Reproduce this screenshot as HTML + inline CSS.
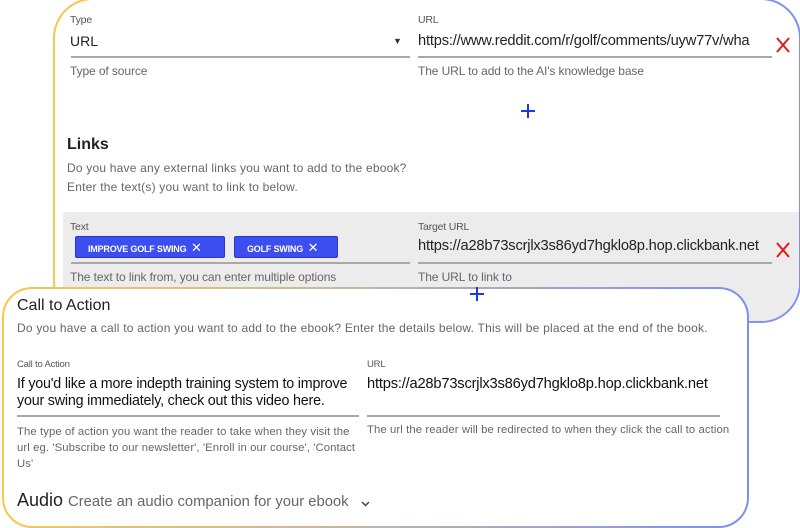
<!DOCTYPE html>
<html><head><style>
*{margin:0;padding:0;box-sizing:border-box}
body{width:800px;height:528px;background:#fff;position:relative;overflow:hidden;font-family:"Liberation Sans",sans-serif;color:#222}
.card{position:absolute;border:2px solid transparent;background:linear-gradient(#fff,#fff) padding-box,linear-gradient(90deg,#f6c94c 0%,#c8b7a0 45%,#7d8ff2 100%) border-box;overflow:hidden}
.a{position:absolute;white-space:nowrap}
.lbl{font-size:10.5px;color:#555;letter-spacing:-0.2px}
.hlp{font-size:12px;color:#666;letter-spacing:-0.1px}
.ul{position:absolute;height:2px;background:#a8a8a8}
.x{position:absolute;width:14px;height:16px}
.plus{position:absolute;width:14px;height:14px}
.chip{position:absolute;background:#3d4ef0;border:1px solid #2a37c8;color:#fff;font-size:9px;font-weight:bold;height:22px;line-height:21px;padding-left:12px;border-radius:2px;letter-spacing:-0.2px}
</style></head><body>
<div class="card" style="left:53px;top:-2px;width:748px;height:325px;border-radius:40px">
  <div style="position:absolute;left:8px;top:212px;width:740px;height:120px;background:#ececec"></div>
</div>
<div class="a lbl" style="left:70px;top:14px">Type</div>
<div class="a" style="left:70px;top:33px;font-size:14px">URL</div>
<div class="a" style="left:393px;top:36px;font-size:9px;color:#333">▼</div>
<div class="ul" style="left:71px;top:56px;width:339px"></div>
<div class="a hlp" style="left:70px;top:64px">Type of source</div>
<div class="a lbl" style="left:418px;top:14px">URL</div>
<div class="a" style="left:418px;top:33px;font-size:14.7px;letter-spacing:-0.2px">https://www.reddit.com/r/golf/comments/uyw77v/wha</div>
<div class="ul" style="left:418px;top:56px;width:354px"></div>
<div class="a hlp" style="left:418px;top:64px">The URL to add to the AI's knowledge base</div>
<svg class="x" style="left:776px;top:37px" viewBox="0 0 14 16"><path d="M1 1L13 15M13 1L1 15" stroke="#e31b1b" stroke-width="2"/></svg>
<svg class="plus" style="left:521px;top:104px" viewBox="0 0 14 14"><path d="M7 0V14M0 7H14" stroke="#2336e6" stroke-width="2"/></svg>
<div class="a" style="left:67px;top:136px;font-size:16px;font-weight:bold;color:#222">Links</div>
<div class="a hlp" style="left:67px;top:161px;font-size:12px;letter-spacing:0.2px">Do you have any external links you want to add to the ebook?</div>
<div class="a hlp" style="left:67px;top:180px;font-size:12px;letter-spacing:0.2px">Enter the text(s) you want to link to below.</div>
<div class="a lbl" style="left:70px;top:221px">Text</div>
<div class="chip" style="left:75px;top:236px;width:150px">IMPROVE GOLF SWING &nbsp;<span style="font-size:13px;font-weight:normal">✕</span></div>
<div class="chip" style="left:234px;top:236px;width:104px">GOLF SWING &nbsp;<span style="font-size:13px;font-weight:normal">✕</span></div>
<div class="ul" style="left:71px;top:262px;width:339px"></div>
<div class="a hlp" style="left:70px;top:270px">The text to link from, you can enter multiple options</div>
<div class="a lbl" style="left:418px;top:221px">Target URL</div>
<div class="a" style="left:418px;top:238px;font-size:14.7px;letter-spacing:-0.2px">https://a28b73scrjlx3s86yd7hgklo8p.hop.clickbank.net</div>
<div class="ul" style="left:418px;top:262px;width:354px"></div>
<div class="a hlp" style="left:418px;top:270px">The URL to link to</div>
<svg class="x" style="left:776px;top:242px" viewBox="0 0 14 16"><path d="M1 1L13 15M13 1L1 15" stroke="#e31b1b" stroke-width="2"/></svg>

<div class="card" style="left:2px;top:287px;width:747px;height:241px;border-radius:30px"></div>
<svg class="plus" style="left:470px;top:287px" viewBox="0 0 14 14"><path d="M7 0V14M0 7H14" stroke="#2336e6" stroke-width="2"/></svg>
<div class="a" style="left:17px;top:297px;font-size:16px;color:#222">Call to Action</div>
<div class="a hlp" style="left:17px;top:321px;font-size:12px;letter-spacing:0.22px">Do you have a call to action you want to add to the ebook? Enter the details below. This will be placed at the end of the book.</div>
<div class="a lbl" style="left:17px;top:359px;font-size:9.5px">Call to Action</div>
<div class="a" style="left:17px;top:376px;font-size:14.3px;line-height:17px;color:#111;letter-spacing:-0.2px">If you'd like a more indepth training system to improve<br>your swing immediately, check out this video here.</div>
<div class="ul" style="left:17px;top:415px;width:342px"></div>
<div class="a hlp" style="left:17px;top:424px;font-size:11.3px;line-height:16px;letter-spacing:0.1px">The type of action you want the reader to take when they visit the<br>url eg. 'Subscribe to our newsletter', 'Enroll in our course', 'Contact<br>Us'</div>
<div class="a lbl" style="left:367px;top:359px;font-size:9.5px">URL</div>
<div class="a" style="left:367px;top:376px;font-size:14.7px;color:#111;letter-spacing:-0.2px">https://a28b73scrjlx3s86yd7hgklo8p.hop.clickbank.net</div>
<div class="ul" style="left:367px;top:415px;width:353px"></div>
<div class="a hlp" style="left:367px;top:424px;font-size:11.3px;letter-spacing:0.1px">The url the reader will be redirected to when they click the call to action</div>
<div class="a" style="left:17px;top:490px;font-size:18px;color:#222">Audio <span style="font-size:14.8px;color:#666">Create an audio companion for your ebook</span></div>
<svg style="position:absolute;left:361px;top:501px" width="9" height="6" viewBox="0 0 9 6"><path d="M1 1L4.5 4.5L8 1" stroke="#444" stroke-width="1.5" fill="none"/></svg>
</body></html>
